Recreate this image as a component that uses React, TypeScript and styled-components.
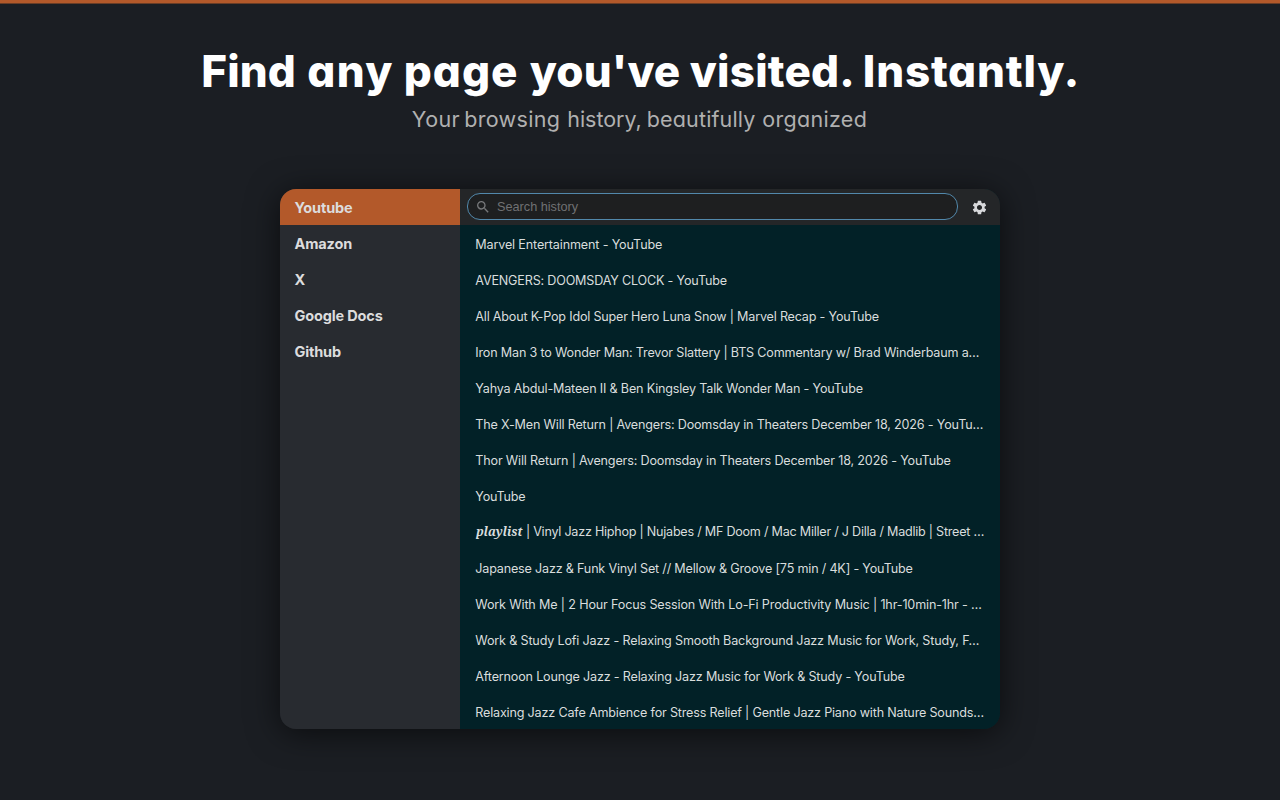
import React from 'react';
import styled, { createGlobalStyle } from 'styled-components';
import { MdSearch, MdSettings } from 'react-icons/md';

const GlobalStyle = createGlobalStyle`
  * { box-sizing: border-box; }
  body { margin: 0; background: #1b1e23; }
`;

const Page = styled.main`
  display: flex;
  flex-direction: column;
  align-items: center;
  width: 1280px;
  height: 800px;
  overflow: hidden;
  border-top: 3px solid #b3592a;
  background: #1b1e23;
  box-shadow: inset 0 1px 0 #693d26;
  font-family: Inter, 'Liberation Sans', sans-serif;
`;

const Hero = styled.header`
  display: flex;
  flex-direction: column;
  align-items: flex-start;
  width: 880px;
  height: 186px;
  padding: 38px 0 0 1.3px;
  font-feature-settings: 'cv11';
`;

const Title = styled.h1`
  display: flex;
  margin: 0;
  color: #fff;
  font-size: 44px;
  font-weight: 800;
  line-height: 60px;
`;

const Subtitle = styled.p`
  display: flex;
  margin: 2px 0 0 210.5px;
  color: #b0b0b0;
  font-size: 21.5px;
  font-weight: 400;
  line-height: 32px;
`;

const Word = styled.span<{ $width: number; $tracking: number }>`
  flex: none;
  width: ${(p) => p.$width}px;
  letter-spacing: ${(p) => p.$tracking}px;
  white-space: pre;
`;

const Window = styled.section`
  display: grid;
  grid-template-columns: 180px 540px;
  flex: none;
  width: 720px;
  height: 540px;
  overflow: hidden;
  border-radius: 16px;
  box-shadow: 0 4px 32px rgba(0, 0, 0, 0.6);
`;

const Sidebar = styled.nav`
  display: flex;
  flex-direction: column;
  background: #282b30;
`;

const Site = styled.div<{ $active: boolean }>`
  height: 36px;
  padding: 1px 0 0 14.5px;
  background: ${(p) => (p.$active ? '#b3592a' : 'transparent')};
  color: #dcdcdd;
  font-size: 14.5px;
  font-weight: 700;
  letter-spacing: -0.15px;
  line-height: 36px;
`;

const Panel = styled.div`
  display: flex;
  flex-direction: column;
  background: #022127;
`;

const Toolbar = styled.div`
  display: flex;
  align-items: center;
  justify-content: space-between;
  height: 36px;
  padding: 0 12.5px 0 7px;
  background: #242628;
`;

const SearchBox = styled.label`
  display: flex;
  align-items: center;
  width: 491px;
  height: 27px;
  margin-bottom: 1px;
  padding-left: 7px;
  border: 1px solid #5288ab;
  border-radius: 13px;
  background: #1e1f20;
  color: #77787a;

  svg { flex: none; }
`;

const SearchInput = styled.input`
  flex: 1;
  min-width: 0;
  margin-left: 6px;
  padding: 0;
  border: 0;
  outline: 0;
  background: transparent;
  color: #dcdcdd;
  font: 12.7px 'Liberation Sans', sans-serif;

  &::placeholder { color: #707173; opacity: 1; }
`;

const SettingsButton = styled.button`
  display: flex;
  padding: 0;
  border: 0;
  background: none;
  color: #d8d9dc;
`;

const Entries = styled.ul`
  margin: 0;
  padding: 0;
  list-style: none;
`;

const Entry = styled.li<{ $tracking: number; $raised: boolean }>`
  display: flex;
  height: 36px;
  padding: ${(p) => (p.$raised ? 1 : 2)}px 0 0 15.3px;
  align-items: center;
  color: #d9dddd;
  font-size: 12.6px;
  letter-spacing: ${(p) => p.$tracking - 0.008}px;
  white-space: pre;
`;

const Emphasis = styled.span`
  width: 47.3px;
  padding-left: 1px;
  font: italic 700 12px 'Noto Serif', 'DejaVu Serif', serif;
  letter-spacing: 0;
`;

type WordSpec = [text: string, width: number, tracking: number];

const titleWords: WordSpec[] = [
  ['Find', 106, 0.1],
  ['any', 96.5, 1.4],
  ['page', 126, 1],
  ["you've", 160, 0.1],
  ['visited.', 173, 0.2],
  ['Instantly.', 217.5, 0.8],
];

const subtitleWords: WordSpec[] = [
  ['Your', 52.5, 0.4],
  ['browsing', 103, 0.3],
  ['history,', 79.5, -0.05],
  ['beautifully', 115.5, 0.15],
  ['organized', 106, 0.3],
];

const sites = ['Youtube', 'Amazon', 'X', 'Google Docs', 'Github'];

const entries: { text: string; tracking: number; lead?: string }[] = [
  { text: 'Marvel Entertainment - YouTube', tracking: -0.15 },
  { text: 'AVENGERS: DOOMSDAY CLOCK - YouTube', tracking: -0.18 },
  { text: 'All About K-Pop Idol Super Hero Luna Snow | Marvel Recap - YouTube', tracking: -0.19 },
  { text: 'Iron Man 3 to Wonder Man: Trevor Slattery | BTS Commentary w/ Brad Winderbaum a…', tracking: -0.18 },
  { text: 'Yahya Abdul-Mateen II & Ben Kingsley Talk Wonder Man - YouTube', tracking: -0.181 },
  { text: 'The X-Men Will Return | Avengers: Doomsday in Theaters December 18, 2026 - YouTu…', tracking: -0.178 },
  { text: 'Thor Will Return | Avengers: Doomsday in Theaters December 18, 2026 - YouTube', tracking: -0.161 },
  { text: 'YouTube', tracking: -0.2 },
  { lead: 'playlist', text: ' | Vinyl Jazz Hiphop | Nujabes / MF Doom / Mac Miller / J Dilla / Madlib | Street …', tracking: -0.235 },
  { text: 'Japanese Jazz & Funk Vinyl Set // Mellow & Groove [75 min / 4K] - YouTube', tracking: -0.185 },
  { text: 'Work With Me | 2 Hour Focus Session With Lo-Fi Productivity Music | 1hr-10min-1hr - …', tracking: -0.146 },
  { text: 'Work & Study Lofi Jazz - Relaxing Smooth Background Jazz Music for Work, Study, F…', tracking: -0.16 },
  { text: 'Afternoon Lounge Jazz - Relaxing Jazz Music for Work & Study - YouTube', tracking: -0.178 },
  { text: 'Relaxing Jazz Cafe Ambience for Stress Relief | Gentle Jazz Piano with Nature Sounds…', tracking: -0.18 },
];

function Words({ words }: { words: WordSpec[] }) {
  return (
    <>
      {words.map(([text, width, tracking]) => (
        <Word key={text} $width={width} $tracking={tracking}>{text + ' '}</Word>
      ))}
    </>
  );
}

export default function App() {
  return (
    <>
      <GlobalStyle />
      <Page>
        <Hero>
          <Title><Words words={titleWords} /></Title>
          <Subtitle><Words words={subtitleWords} /></Subtitle>
        </Hero>
        <Window>
          <Sidebar>
            {sites.map((site, i) => (
              <Site key={site} $active={i === 0}>{site}</Site>
            ))}
          </Sidebar>
          <Panel>
            <Toolbar>
              <SearchBox>
                <MdSearch size={16} />
                <SearchInput placeholder="Search history" />
              </SearchBox>
              <SettingsButton aria-label="Settings">
                <MdSettings size={17} />
              </SettingsButton>
            </Toolbar>
            <Entries>
              {entries.map(({ text, tracking, lead }) => (
                <Entry key={text} $tracking={tracking} $raised={!!lead}>
                  {lead && <Emphasis>{lead}</Emphasis>}
                  <span>{text}</span>
                </Entry>
              ))}
            </Entries>
          </Panel>
        </Window>
      </Page>
    </>
  );
}
